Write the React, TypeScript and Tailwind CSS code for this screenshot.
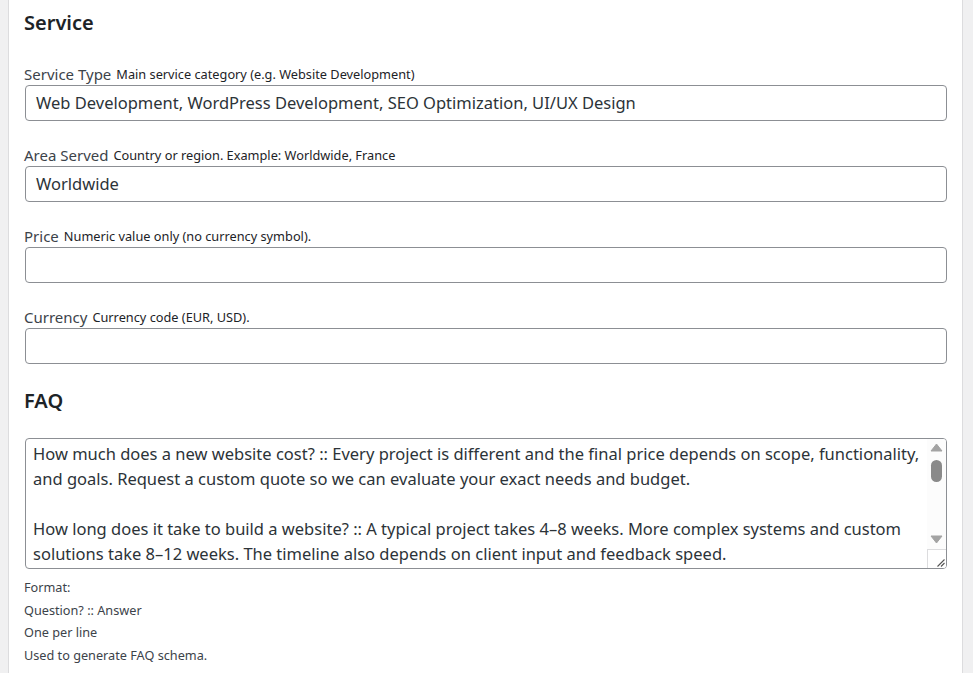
import React from 'react';

const font = { fontFamily: '"Noto Sans", "Open Sans", sans-serif' };

type FieldProps = { label: string; help: string; value?: string };

// Single text field with inline help text next to the label
const Field: React.FC<FieldProps> = ({ label, help, value }) => (
  <div className="mb-[22px]">
    <div className="flex items-baseline gap-[5px] h-[22px] pt-[1px] mb-[1px] -ml-[1px]">
      <span className="text-[15px] text-[#3c434a]">{label}</span>
      <span className="text-[12.75px] text-[#1d2327] -translate-y-[1px]">{help}</span>
    </div>
    <div className="h-[36px] rounded-[4px] border border-[#8c8f94] bg-white flex items-center px-[10px] text-[16.5px] text-[#2c3338]">
      {value}
    </div>
  </div>
);

const faqLines = [
  'How much does a new website cost? :: Every project is different and the final price depends on scope, functionality,',
  'and goals. Request a custom quote so we can evaluate your exact needs and budget.',
  '',
  'How long does it take to build a website? :: A typical project takes 4–8 weeks. More complex systems and custom',
  'solutions take 8–12 weeks. The timeline also depends on client input and feedback speed.',
];

const App: React.FC = () => {
  return (
    <div className="w-[973px] h-[673px] bg-[#f0f0f1] overflow-hidden" style={font}>
      <div className="ml-[8px] w-[955px] h-full bg-white border-x border-[#dcdcde] pl-[16px] pr-[15px]">
        <h2 className="text-[20px] font-semibold text-[#1d2327] pt-[8px] h-[62px] -ml-[1px]">Service</h2>

        <Field
          label="Service Type"
          help="Main service category (e.g. Website Development)"
          value="Web Development, WordPress Development, SEO Optimization, UI/UX Design"
        />
        <Field label="Area Served" help="Country or region. Example: Worldwide, France" value="Worldwide" />
        <Field label="Price" help="Numeric value only (no currency symbol)." />
        <Field label="Currency" help="Currency code (EUR, USD)." />

        <h2 className="text-[20px] font-semibold text-[#1d2327] h-[52px] -ml-[1px]">FAQ</h2>

        <div className="relative h-[131px] rounded-[4px] border border-[#8c8f94] bg-white flex overflow-hidden">
          <div className="flex-1 pl-[7px] pt-[2px] text-[16.5px] leading-[25px] text-[#2c3338] whitespace-nowrap overflow-hidden">
            {faqLines.map((l, i) => (
              <div key={i} className="h-[25px]">{l}</div>
            ))}
          </div>
          <div className="w-[19px] flex flex-col items-center bg-[#fcfcfc]">
            <svg width="13" height="9" viewBox="0 0 13 9" className="mt-[4px]">
              <path d="M1 8 L6.5 1 L12 8 Z" fill="#a3a3a3" stroke="#a3a3a3" strokeLinejoin="round" />
            </svg>
            <div className="mt-[8px] w-[11px] h-[22px] rounded-[6px] bg-[#8a8a8a]" />
            <div className="flex-1" />
            <svg width="13" height="9" viewBox="0 0 13 9" className="mb-[24px]">
              <path d="M1 1 L6.5 8 L12 1 Z" fill="#a3a3a3" stroke="#a3a3a3" strokeLinejoin="round" />
            </svg>
          </div>
          {/* resize grip */}
          <div className="absolute right-0 bottom-0 w-[19px] h-[19px] border-l border-t border-[#dcdcde] bg-white flex items-end justify-end pr-[1px] pb-[1px]">
            <svg width="10" height="10" viewBox="0 0 10 10">
              <path d="M9.5 2.5 L2.5 9.5 M9.5 6 L6 9.5" stroke="#555" strokeWidth="1.1" />
            </svg>
          </div>
        </div>

        <div className="mt-[7px] -ml-[1px] text-[12.7px] leading-[22.7px] text-[#3c434a]">
          <div>Format:</div>
          <div>Question? :: Answer</div>
          <div>One per line</div>
          <div>Used to generate FAQ schema.</div>
        </div>
      </div>
    </div>
  );
};

export default App;
